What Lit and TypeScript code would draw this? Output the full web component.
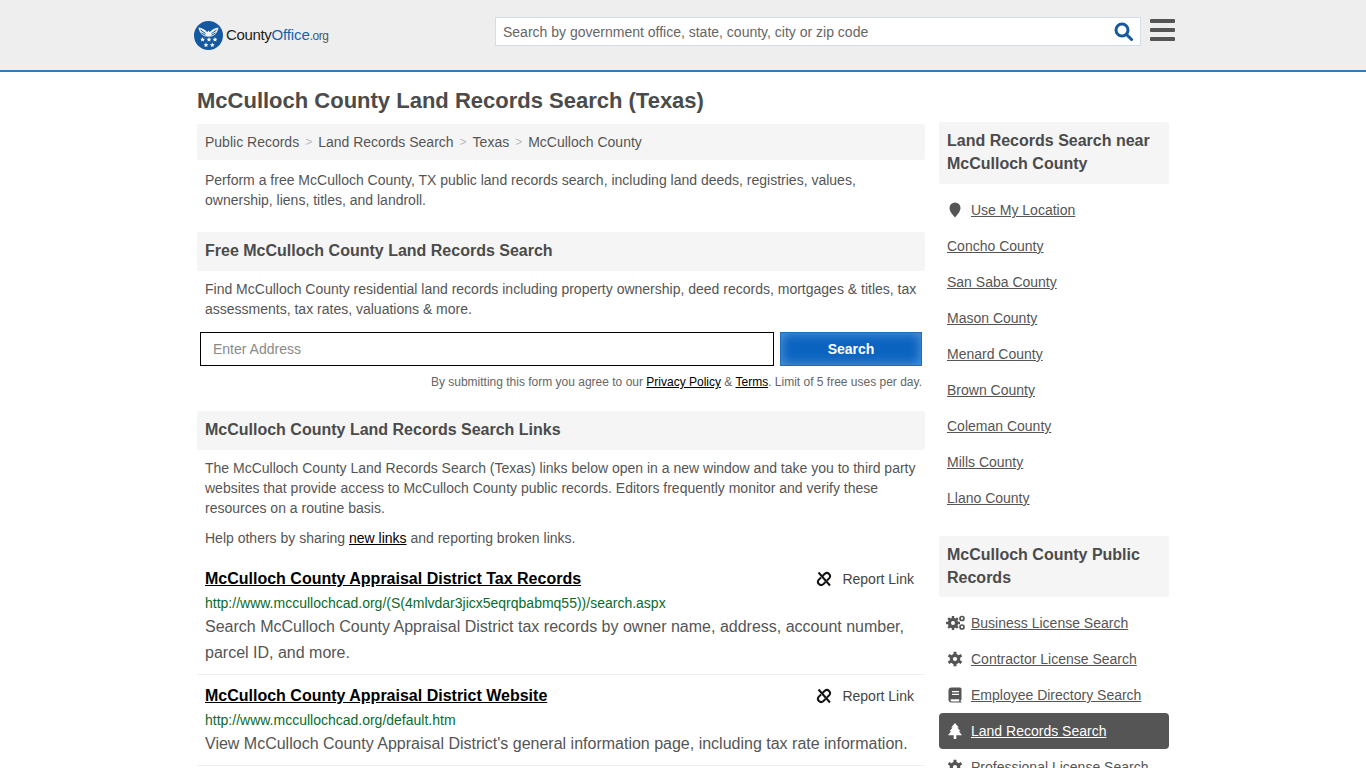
import { LitElement, html, css, svg } from 'lit';
import { customElement } from 'lit/decorators.js';

const ICONS: Record<string, unknown> = {
  cogs: svg`<circle cx="6" cy="8" r="3.600" fill="none" stroke="currentColor" stroke-width="3.200"/><path d="M6 1v3M6 12v3M-1 8h3M10 8h3M1.200 3.200l2 2M8.800 10.800l2 2M1.200 12.800l2-2M8.800 5.200l2-2" stroke="currentColor" stroke-width="2.400"/><circle cx="15" cy="3.500" r="2" fill="none" stroke="currentColor" stroke-width="1.700"/><circle cx="15" cy="12" r="2" fill="none" stroke="currentColor" stroke-width="1.700"/>`,
  cog: svg`<circle cx="8" cy="8" r="3.700" fill="none" stroke="currentColor" stroke-width="3.200"/><path d="M8 .8v3M8 12.200v3M1.500 4.300l2.600 1.500M11.900 10.200l2.600 1.500M1.500 11.700l2.600-1.500M11.900 5.800l2.600-1.500" stroke="currentColor" stroke-width="3"/>`,
  book: svg`<path fill-rule="evenodd" d="M4.500 .5h8.500a1.500 1.500 0 0 1 1.500 1.500v10.500l-.8.8v1l.8.700v.5H4.500A3 3 0 0 1 1.500 12.500V3.500A3 3 0 0 1 4.500 .5zM5 4v1.300h7V4zm0 2.700V8h7V6.700zM4.500 12.200a1.100 1.100 0 0 0 0 2.200h7.700v-2.200z" fill="currentColor"/>`,
  tree: svg`<path d="M8 0l3.800 4.600h-1.500l3.200 3.700h-1.700l3.200 4H9.300V16H6.700v-3.700H1l3.200-4H2.500l3.200-3.700H4.200z" fill="currentColor"/>`,
};

// five point star around 0,0
const STAR = 'M0-2.400l.7 1.600 1.700.1-1.300 1.100.4 1.700L0 1.200l-1.500.9.4-1.700-1.300-1.100 1.700-.1z';

@customElement('app-root')
export class AppRoot extends LitElement {
  static override styles = css`
    :host {
      display: block;
      height: 768px;
      overflow: hidden;
      background: #fff;
      color: #555;
      font-family: 'Liberation Sans', Arial, sans-serif;
      font-size: 14px;
      line-height: 20px;
    }
    a {
      color: inherit;
    }
    header {
      height: 70px;
      background: #eee;
      border-bottom: 2px solid #337ab7;
    }
    .head-in {
      padding-left: 194px;
      display: flex;
      align-items: center;
      height: 62px;
    }
    .logo {
      display: flex;
      align-items: center;
      width: 301px;
      margin-top: 8px;
    }
    .logo-text {
      margin-left: 3px;
      font-size: 15px;
      letter-spacing: -0.35px;
      color: #222;
    }
    .logo-text b {
      font-weight: 400;
      color: #1763ad;
      letter-spacing: -0.1px;
    }
    .logo-text small {
      font-size: 12px;
      color: #555;
      letter-spacing: -0.5px;
    }
    .search {
      width: 646px;
      height: 29px;
      box-sizing: border-box;
      margin-top: 1px;
      border: 1px solid #d3dde8;
      background: #fff;
      display: flex;
      align-items: center;
      justify-content: space-between;
      padding: 0 7px 0 7px;
      color: #666;
    }
    .burger {
      margin-left: 9px;
      display: flex;
      flex-direction: column;
      gap: 5px;
      margin-top: -3px;
    }
    .burger i {
      display: block;
      width: 25px;
      height: 4px;
      border-radius: 1px;
      background: #555;
    }
    .wrap {
      width: 972px;
      margin: 0 auto;
    }
    h1 {
      margin: 0;
      padding-top: 16px;
      font-size: 22px;
      line-height: 26px;
      font-weight: 700;
      color: #4b4b4b;
    }
    .cols {
      display: flex;
      gap: 14px;
      align-items: flex-start;
    }
    main {
      width: 728px;
      padding-top: 10px;
    }
    aside {
      width: 230px;
      padding-top: 8px;
    }
    .crumbs {
      background: #f5f5f5;
      height: 36px;
      border-radius: 2px;
      padding: 0 8px;
      display: flex;
      align-items: center;
      color: #555;
    }
    .crumbs span {
      color: #bbb;
      margin: 0 6px;
      font-size: 12px;
    }
    p {
      margin: 0;
      padding: 0 8px;
    }
    .intro {
      margin-top: 10px;
    }
    h2 {
      margin: 22px 0 8px;
      padding: 7px 8px 9px;
      background: #f5f5f5;
      border-radius: 2px;
      font-size: 16px;
      line-height: 23px;
      font-weight: 700;
      color: #4b4b4b;
    }
    .form {
      display: flex;
      gap: 6px;
      margin: 13px 3px 0;
    }
    .addr {
      flex: 1;
      height: 34px;
      box-sizing: border-box;
      border: 1px solid #000;
      padding: 0 12px;
      display: flex;
      align-items: center;
      color: #8a8a8a;
    }
    .go {
      width: 142px;
      height: 34px;
      box-sizing: border-box;
      border: 1px solid #1f6fb8;
      background: #0b64c0;
      box-shadow: inset 0 0 12px rgba(160, 200, 240, 0.55);
      color: #fff;
      font-weight: 700;
      display: flex;
      align-items: center;
      justify-content: center;
    }
    .legal {
      margin: 6px 3px 0 0;
      padding: 0;
      text-align: right;
      font-size: 12px;
      color: #666;
    }
    .legal a {
      color: #000;
    }
    .links-h {
      margin-top: 19px;
    }
    .help {
      margin-top: 10px;
    }
    .help a {
      color: #000;
    }
    .res {
      padding: 0 8px 8px;
      border-bottom: 1px solid #eee;
    }
    .res-top {
      display: flex;
      justify-content: space-between;
      align-items: center;
      height: 26px;
    }
    .res-top a {
      font-size: 16px;
      font-weight: 700;
      color: #000;
    }
    .report {
      display: flex;
      align-items: center;
      gap: 10px;
      margin-right: 3px;
      color: #444;
    }
    .url {
      margin-top: 2px;
      color: #0a6b2d;
      line-height: 19px;
    }
    .desc {
      margin-top: 1px;
      padding: 0;
      font-size: 16px;
      line-height: 26px;
    }
    .res.first {
      margin-top: 18px;
    }
    .res.second {
      margin-top: 8px;
    }
    aside h3 {
      margin: 0;
      padding: 7px 8px 8px;
      background: #f5f5f5;
      border-radius: 2px;
      font-size: 16px;
      line-height: 23px;
      font-weight: 700;
      color: #4b4b4b;
    }
    aside h3.top {
      padding-bottom: 9px;
    }
    .side {
      display: flex;
      flex-direction: column;
      margin: 8px 0 20px;
    }
    .side .row {
      height: 36px;
      display: flex;
      align-items: center;
      padding: 0 8px;
      box-sizing: border-box;
      color: #555;
    }
    .row svg {
      flex: none;
      width: 16px;
      height: 16px;
      margin-right: 8px;
      overflow: visible;
    }
    .row.on {
      background: #555;
      color: #fff;
      border-radius: 4px;
    }
  `;

  private nearby = [
    'Concho County',
    'San Saba County',
    'Mason County',
    'Menard County',
    'Brown County',
    'Coleman County',
    'Mills County',
    'Llano County',
  ];

  private records = [
    { name: 'Business License Search', icon: 'cogs' },
    { name: 'Contractor License Search', icon: 'cog' },
    { name: 'Employee Directory Search', icon: 'book' },
    { name: 'Land Records Search', icon: 'tree', on: true },
    { name: 'Professional License Search', icon: 'cog' },
  ];

  private unlink() {
    return html`<svg width="16" height="16" viewBox="0 0 16 16" fill="none" stroke="#111" stroke-width="2">
      <path d="M6.500 5l2.300-2.300a3.200 3.200 0 0 1 4.500 4.500L11 9.500" />
      <path d="M9.500 11l-2.300 2.300a3.200 3.200 0 0 1-4.500-4.500L5 6.500" />
      <path d="M2.500 1.500l11.500 13" />
    </svg>`;
  }

  override render() {
    return html`
      <header>
        <div class="head-in">
          <div class="logo">
            <svg width="29" height="29" viewBox="0 0 29 29">
              <circle cx="14.500" cy="14.500" r="14.500" fill="#14599f" />
              <path d="M4.500 6.500c3.500 .5 6.500 2 8.500 4.500l1.500 1.500 1.500-1.500c2-2.500 5-4 8.500-4.500-.6 4.500-3.500 8-7 9h-6c-3.500-1-6.400-4.500-7-9z" fill="#eef2f7" />
              <path d="M6.500 9l5 3.500M7.500 12l4 2.300M22.500 9l-5 3.500M21.500 12l-4 2.300" stroke="#14599f" stroke-width="1" />
              <path d="M14.500 9.500l1.500 2-1.500 4-1.500-4z" fill="#fff" />
              ${[8.6, 15, 21].map((x) => svg`<path transform="translate(${x} 18.500)" d=${STAR} fill="#fff" />`)}
              ${[12, 18.300].map((x) => svg`<path transform="translate(${x} 24)" d=${STAR} fill="#fff" />`)}
            </svg>
            <span class="logo-text">County<b>Office</b><small>.org</small></span>
          </div>
          <div class="search">
            <span>Search by government office, state, county, city or zip code</span>
            <svg width="19" height="19" viewBox="0 0 19 19" fill="none" stroke="#14599f" stroke-width="3">
              <circle cx="8" cy="8" r="6" />
              <path d="M12.500 12.500l5 5" stroke-linecap="round" />
            </svg>
          </div>
          <div class="burger"><i></i><i></i><i></i></div>
        </div>
      </header>
      <div class="wrap">
        <h1>McCulloch County Land Records Search (Texas)</h1>
        <div class="cols">
          <main>
            <div class="crumbs">
              Public Records<span>&gt;</span>Land Records Search<span>&gt;</span>Texas<span>&gt;</span>McCulloch County
            </div>
            <p class="intro">
              Perform a free McCulloch County, TX public land records search, including land deeds, registries, values,
              ownership, liens, titles, and landroll.
            </p>
            <h2>Free McCulloch County Land Records Search</h2>
            <p>
              Find McCulloch County residential land records including property ownership, deed records, mortgages &amp;
              titles, tax assessments, tax rates, valuations &amp; more.
            </p>
            <div class="form">
              <div class="addr">Enter Address</div>
              <div class="go">Search</div>
            </div>
            <p class="legal">
              By submitting this form you agree to our <a href="#">Privacy Policy</a> &amp; <a href="#">Terms</a>. Limit
              of 5 free uses per day.
            </p>
            <h2 class="links-h">McCulloch County Land Records Search Links</h2>
            <p>
              The McCulloch County Land Records Search (Texas) links below open in a new window and take you to third
              party websites that provide access to McCulloch County public records. Editors frequently monitor and
              verify these resources on a routine basis.
            </p>
            <p class="help">Help others by sharing <a href="#">new links</a> and reporting broken links.</p>
            <div class="res first">
              <div class="res-top">
                <a href="#">McCulloch County Appraisal District Tax Records</a>
                <span class="report">${this.unlink()}Report Link</span>
              </div>
              <div class="url">http://www.mccullochcad.org/(S(4mlvdar3jicx5eqrqbabmq55))/search.aspx</div>
              <p class="desc">
                Search McCulloch County Appraisal District tax records by owner name, address, account number, parcel
                ID, and more.
              </p>
            </div>
            <div class="res second">
              <div class="res-top">
                <a href="#">McCulloch County Appraisal District Website</a>
                <span class="report">${this.unlink()}Report Link</span>
              </div>
              <div class="url">http://www.mccullochcad.org/default.htm</div>
              <p class="desc">View McCulloch County Appraisal District's general information page, including tax rate information.</p>
            </div>
          </main>
          <aside>
            <h3 class="top">Land Records Search near McCulloch County</h3>
            <div class="side">
              <div class="row">
                <svg viewBox="0 0 16 16"><path d="M8 .5a5.500 5.500 0 0 1 5.500 5.500c0 3.500-3.500 7-5.500 9.500-2-2.500-5.500-6-5.500-9.500A5.500 5.500 0 0 1 8 .5z" fill="#555" /></svg>
                <a href="#">Use My Location</a>
              </div>
              ${this.nearby.map((n) => html`<div class="row"><a href="#">${n}</a></div>`)}
            </div>
            <h3>McCulloch County Public Records</h3>
            <div class="side">
              ${this.records.map(
                (r) => html`<div class="row ${r.on ? 'on' : ''}">
                  <svg viewBox="0 0 16 16">${ICONS[r.icon]}</svg>
                  <a href="#">${r.name}</a>
                </div>`
              )}
            </div>
          </aside>
        </div>
      </div>
    `;
  }
}
